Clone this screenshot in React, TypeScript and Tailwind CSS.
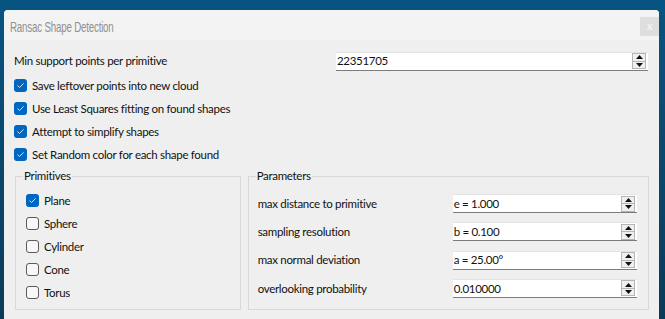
import React from "react";

const font = { fontFamily: "Lato, 'Liberation Sans', sans-serif" };

function Check({ checked }: { checked: boolean }) {
  return checked ? (
    <span className="flex h-[13px] w-[13px] shrink-0 items-center justify-center rounded-[3px] bg-[#0067c0]">
      <svg width="9" height="7" viewBox="0 0 9 7">
        <path d="M1.5 3.6 L3.5 5.5 L7.6 1.4" fill="none" stroke="#cfe3f6" strokeWidth="1" />
      </svg>
    </span>
  ) : (
    <span className="h-[13px] w-[13px] shrink-0 rounded-[3px] border border-[#5b5b5b] bg-[#f7f7f7]" />
  );
}

function CheckRow({ label, checked }: { label: string; checked: boolean }) {
  return (
    <div className="flex h-[23px] items-center gap-[5px]">
      <Check checked={checked} />
      <span>{label}</span>
    </div>
  );
}

function SpinBox({ value, className = "" }: { value: string; className?: string }) {
  return (
    <div className={`flex h-[19px] items-center border-t border-[#e3e3e3] border-b border-b-[#7c7c7c] bg-white pl-[1px] pr-[2px] ${className}`}>
      <span className="flex-1 leading-none">{value}</span>
      <div className="flex h-[16px] w-[14px] flex-col border border-[#b4b4b4] bg-[#f0f0f0]">
        <div className="flex flex-1 items-center justify-center border-b border-[#b4b4b4]">
          <svg width="7" height="4" viewBox="0 0 7 4"><path d="M3.5 0 L7 4 L0 4Z" fill="#111" /></svg>
        </div>
        <div className="flex flex-1 items-center justify-center">
          <svg width="7" height="4" viewBox="0 0 7 4"><path d="M0 0 L7 0 L3.5 4Z" fill="#111" /></svg>
        </div>
      </div>
    </div>
  );
}

function GroupBox({ title, className = "", children }: { title: string; className?: string; children: React.ReactNode }) {
  return (
    <div className={`relative border border-[#d8d8d8] ${className}`}>
      <span className="absolute left-[7px] top-[-9px] bg-[#efefef] px-[1px] leading-[16px]">{title}</span>
      {children}
    </div>
  );
}

export default function App() {
  const params = [
    ["max distance to primitive", "e = 1.000"],
    ["sampling resolution", "b = 0.100"],
    ["max normal deviation", "a = 25.00°"],
    ["overlooking probability", "0.010000"],
  ];
  const prims = ["Plane", "Sphere", "Cylinder", "Cone", "Torus"];

  return (
    <div className="h-[319px] w-[665px] overflow-hidden bg-gradient-to-b from-[#075582] to-[#0b3a58] pl-[4px] pr-[6px] pt-[10px]">
      <div className="flex h-full flex-col rounded-t-[4px] bg-[#efefef] text-[11.5px] tracking-[-0.3px] text-[#111]" style={font}>
        {/* Title bar */}
        <div className="flex h-[30px] items-start justify-between rounded-t-[4px] bg-[#f3f3f3] pl-[6px]">
          <span
            className="mt-[6px] inline-block origin-left scale-x-[0.65] whitespace-nowrap text-[15px] text-[#8f8f8f]"
            style={{ fontFamily: "'Liberation Sans', sans-serif" }}
          >
            Ransac Shape Detection
          </span>
          <div className="mt-[7px] flex h-[19px] w-[19px] items-center justify-center bg-[#dedede] text-[11px] text-[#f7f7f7]">
            x
          </div>
        </div>

        {/* Body */}
        <div className="flex flex-col px-[10px] pt-[11px]">
          <div className="flex h-[20px] items-center">
            <span className="w-[322px]">Min support points per primitive</span>
            <SpinBox value="22351705" className="w-[312px]" />
          </div>
          <div className="mt-[3px] flex flex-col">
            <CheckRow label="Save leftover points into new cloud" checked />
            <CheckRow label="Use Least Squares fitting on found shapes" checked />
            <CheckRow label="Attempt to simplify shapes" checked />
            <CheckRow label="Set Random color for each shape found" checked />
          </div>

          <div className="mt-[10px] flex gap-[7px] pl-[1px]">
            <GroupBox title="Primitives" className="h-[134px] w-[226px] pl-[10px] pt-[12px]">
              {prims.map((p, i) => (
                <CheckRow key={p} label={p} checked={i === 0} />
              ))}
            </GroupBox>
            <GroupBox title="Parameters" className="h-[134px] w-[402px] pl-[9px] pr-[11px] pt-[17px]">
              <div className="flex flex-col gap-[9.3px]">
                {params.map(([l, v]) => (
                  <div key={l} className="flex items-center">
                    <span className="w-[195px]">{l}</span>
                    <SpinBox value={v} className="flex-1" />
                  </div>
                ))}
              </div>
            </GroupBox>
          </div>
        </div>
      </div>
    </div>
  );
}
